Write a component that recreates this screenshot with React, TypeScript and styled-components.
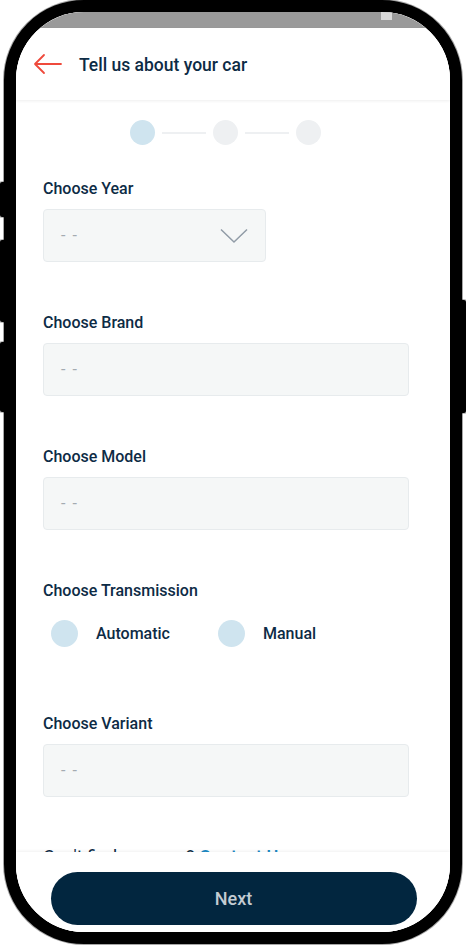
import React from "react";
import styled, { createGlobalStyle } from "styled-components";

const Global = createGlobalStyle`
  html, body { margin: 0; padding: 0; background: #ffffff; }
  body { font-family: Roboto, "Noto Sans", "Liberation Sans", sans-serif; }
  * { box-sizing: border-box; }
`;

const Stage = styled.div`
  position: relative;
  width: 466px;
  height: 945px;
  padding-left: 4px;
`;

const SideButton = styled.div<{ $side: "left" | "right"; $top: number; $h: number }>`
  position: absolute;
  ${(p) => (p.$side === "left" ? "left: 0;" : "right: 0;")}
  top: ${(p) => p.$top}px;
  height: ${(p) => p.$h}px;
  width: 6px;
  background: #000;
  border-radius: 2px;
  box-shadow: 0 0 0 1px rgba(0, 0, 0, 0.25);
`;

const Phone = styled.div`
  position: relative;
  z-index: 1;
  width: 458px;
  height: 944px;
  border: 12px solid #000;
  border-radius: 80px;
  overflow: hidden;
  background: #fff;
  box-shadow: 0 0 0 1px rgba(0, 0, 0, 0.35);
`;

const Screen = styled.div`
  display: flex;
  flex-direction: column;
  height: 100%;
  background: #fff;
`;

const StatusBar = styled.div`
  flex: 0 0 16px;
  background: #9a9a9a;
  display: flex;
  align-items: flex-start;
  padding-left: 365px;
  gap: 23px;
`;

const StatusDot = styled.div`
  width: 11px;
  height: 8px;
  background: #d9d9d9;
`;

const Header = styled.header`
  position: relative;
  z-index: 2;
  flex: 0 0 72px;
  display: flex;
  align-items: center;
  padding-left: 17px;
  gap: 16px;
  background: #fff;
  box-shadow: 0 1px 3px rgba(0, 0, 0, 0.07);
`;

const Title = styled.h1`
  margin: 2px 0 0;
  font-size: 17.5px;
  font-weight: 500;
  color: #0d2b45;
  line-height: 22px;
`;

const Content = styled.main`
  flex: 1 1 auto;
  overflow: hidden;
  padding: 20px 41px 0 27px;
`;

const Stepper = styled.div`
  display: flex;
  align-items: center;
  justify-content: center;
  padding-right: 2px;
`;

const StepDot = styled.div<{ $active?: boolean }>`
  width: 25px;
  height: 25px;
  border-radius: 50%;
  background: ${(p) => (p.$active ? "#cfe4ef" : "#eef0f2")};
`;

const StepLine = styled.div`
  width: 44px;
  height: 2px;
  margin: 0 7px;
  background: #eef0f2;
`;

const Field = styled.section<{ $mt: number }>`
  margin-top: ${(p) => p.$mt}px;
`;

const Label = styled.div`
  font-size: 16px;
  font-weight: 500;
  line-height: 20px;
  color: #0d2b45;
`;

const Box = styled.div<{ $w?: number }>`
  margin-top: 10px;
  width: ${(p) => (p.$w ? `${p.$w}px` : "100%")};
  height: 53px;
  background: #f5f7f7;
  border: 1px solid #e7ebed;
  border-radius: 4px;
  display: flex;
  align-items: center;
  justify-content: space-between;
  padding: 0 17px 0 17px;
`;

const Placeholder = styled.span`
  font-size: 16px;
  color: #a3abb1;
  letter-spacing: 1.5px;
`;

const RadioRow = styled.div`
  display: flex;
  margin-top: 18px;
  padding-left: 8px;
  height: 28px;
  align-items: center;
`;

const RadioOption = styled.label`
  width: 167px;
  display: flex;
  align-items: center;
  gap: 18px;
  font-size: 16px;
  font-weight: 500;
  color: #0d2b45;
`;

const RadioCircle = styled.span`
  width: 27px;
  height: 27px;
  border-radius: 50%;
  background: #cfe4ef;
  flex: 0 0 auto;
`;

const HelpText = styled.p`
  margin: 50px 0 0;
  font-size: 18px;
  line-height: 20px;
  color: #0d2b45;
  white-space: nowrap;
`;

const Link = styled.span`
  color: #1b8ac4;
  font-weight: 500;
`;

const Footer = styled.footer`
  position: relative;
  z-index: 2;
  flex: 0 0 80px;
  padding-top: 20px;
  background: #fff;
  box-shadow: 0 -1px 3px rgba(0, 0, 0, 0.06);
  display: flex;
  justify-content: center;
  align-items: flex-start;
`;

const NextButton = styled.button`
  width: 366px;
  height: 53px;
  margin-left: 1px;
  border: none;
  border-radius: 27px;
  background: #02263f;
  color: #c3cbd2;
  font-family: inherit;
  font-size: 18px;
  font-weight: 500;
`;

const BackArrow = () => (
  <svg width="30" height="22" viewBox="0 0 30 22" fill="none">
    <path d="M28 11H2M11 2L2 11L11 20" stroke="#ef4a3c" strokeWidth="1.8" strokeLinecap="round" strokeLinejoin="round" />
  </svg>
);

const Chevron = () => (
  <svg width="28" height="16" viewBox="0 0 28 16" fill="none">
    <path d="M1 1.5L14 14L27 1.5" stroke="#919ca7" strokeWidth="1.5" />
  </svg>
);

export default function App() {
  return (
    <>
      <Global />
      <Stage>
        <SideButton $side="left" $top={182} $h={35} />
        <SideButton $side="left" $top={240} $h={82} />
        <SideButton $side="left" $top={342} $h={70} />
        <SideButton $side="right" $top={300} $h={113} />
        <Phone>
          <Screen>
            <StatusBar>
              <StatusDot />
              <StatusDot />
            </StatusBar>
            <Header>
              <BackArrow />
              <Title>Tell us about your car</Title>
            </Header>
            <Content>
              <Stepper>
                <StepDot $active />
                <StepLine />
                <StepDot />
                <StepLine />
                <StepDot />
              </Stepper>
              <Field $mt={34}>
                <Label>Choose Year</Label>
                <Box $w={223}>
                  <Placeholder>- -</Placeholder>
                  <Chevron />
                </Box>
              </Field>
              <Field $mt={51}>
                <Label>Choose Brand</Label>
                <Box>
                  <Placeholder>- -</Placeholder>
                </Box>
              </Field>
              <Field $mt={51}>
                <Label>Choose Model</Label>
                <Box>
                  <Placeholder>- -</Placeholder>
                </Box>
              </Field>
              <Field $mt={51}>
                <Label>Choose Transmission</Label>
                <RadioRow>
                  <RadioOption>
                    <RadioCircle />
                    Automatic
                  </RadioOption>
                  <RadioOption>
                    <RadioCircle />
                    Manual
                  </RadioOption>
                </RadioRow>
              </Field>
              <Field $mt={67}>
                <Label>Choose Variant</Label>
                <Box>
                  <Placeholder>- -</Placeholder>
                </Box>
              </Field>
              <HelpText>
                Can't find your car? <Link>Contact Us</Link>
              </HelpText>
            </Content>
            <Footer>
              <NextButton>Next</NextButton>
            </Footer>
          </Screen>
        </Phone>
      </Stage>
    </>
  );
}
